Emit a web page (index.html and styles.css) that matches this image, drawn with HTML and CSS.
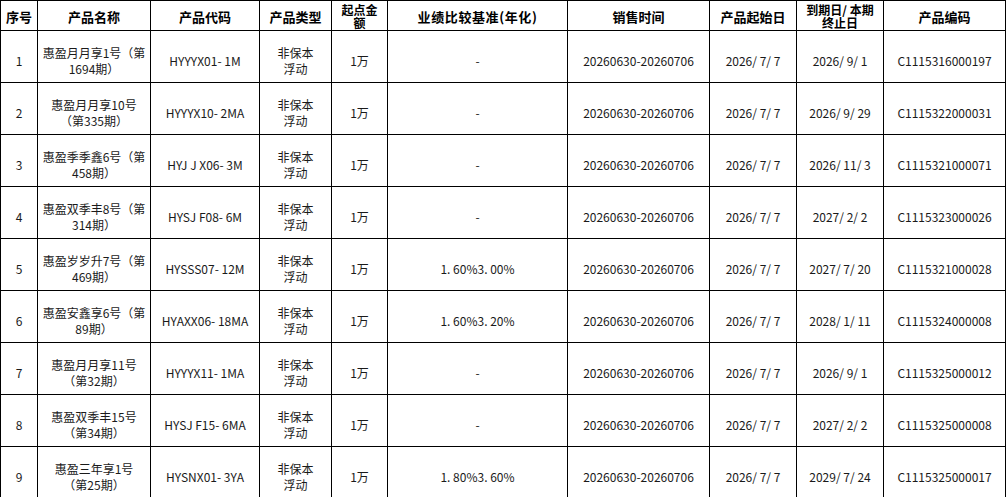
FILE: index.html
```html
<!DOCTYPE html>
<html lang="zh-CN">
<head>
<meta charset="utf-8">
<title>产品列表</title>
<link rel="stylesheet" href="styles.css">
</head>
<body>
<div class="sheet">
  <div class="h">序号</div>
  <div class="h">产品名称</div>
  <div class="h">产品代码</div>
  <div class="h">产品类型</div>
  <div class="h two">起点金<br>额</div>
  <div class="h wide">业绩比较基准(年化)</div>
  <div class="h">销售时间</div>
  <div class="h">产品起始日</div>
  <div class="h two">到期日/ 本期<br>终止日</div>
  <div class="h">产品编码</div>

  <div class="c">1</div>
  <div class="c">惠盈月月享1号（第<br>1694期）</div>
  <div class="c">HYYYX01- 1M</div>
  <div class="c">非保本<br>浮动</div>
  <div class="c">1万</div>
  <div class="c">-</div>
  <div class="c">20260630-20260706</div>
  <div class="c">2026/ 7/ 7</div>
  <div class="c">2026/ 9/ 1</div>
  <div class="c">C1115316000197</div>

  <div class="c">2</div>
  <div class="c">惠盈月月享10号<br>（第335期）</div>
  <div class="c">HYYYX10- 2MA</div>
  <div class="c">非保本<br>浮动</div>
  <div class="c">1万</div>
  <div class="c">-</div>
  <div class="c">20260630-20260706</div>
  <div class="c">2026/ 7/ 7</div>
  <div class="c">2026/ 9/ 29</div>
  <div class="c">C1115322000031</div>

  <div class="c">3</div>
  <div class="c">惠盈季季鑫6号（第<br>458期）</div>
  <div class="c">HYJ J X06- 3M</div>
  <div class="c">非保本<br>浮动</div>
  <div class="c">1万</div>
  <div class="c">-</div>
  <div class="c">20260630-20260706</div>
  <div class="c">2026/ 7/ 7</div>
  <div class="c">2026/ 11/ 3</div>
  <div class="c">C1115321000071</div>

  <div class="c">4</div>
  <div class="c">惠盈双季丰8号（第<br>314期）</div>
  <div class="c">HYSJ F08- 6M</div>
  <div class="c">非保本<br>浮动</div>
  <div class="c">1万</div>
  <div class="c">-</div>
  <div class="c">20260630-20260706</div>
  <div class="c">2026/ 7/ 7</div>
  <div class="c">2027/ 2/ 2</div>
  <div class="c">C1115323000026</div>

  <div class="c">5</div>
  <div class="c">惠盈岁岁升7号（第<br>469期）</div>
  <div class="c">HYSSS07- 12M</div>
  <div class="c">非保本<br>浮动</div>
  <div class="c">1万</div>
  <div class="c">1. 60%3. 00%</div>
  <div class="c">20260630-20260706</div>
  <div class="c">2026/ 7/ 7</div>
  <div class="c">2027/ 7/ 20</div>
  <div class="c">C1115321000028</div>

  <div class="c">6</div>
  <div class="c">惠盈安鑫享6号（第<br>89期）</div>
  <div class="c">HYAXX06- 18MA</div>
  <div class="c">非保本<br>浮动</div>
  <div class="c">1万</div>
  <div class="c">1. 60%3. 20%</div>
  <div class="c">20260630-20260706</div>
  <div class="c">2026/ 7/ 7</div>
  <div class="c">2028/ 1/ 11</div>
  <div class="c">C1115324000008</div>

  <div class="c">7</div>
  <div class="c">惠盈月月享11号<br>（第32期）</div>
  <div class="c">HYYYX11- 1MA</div>
  <div class="c">非保本<br>浮动</div>
  <div class="c">1万</div>
  <div class="c">-</div>
  <div class="c">20260630-20260706</div>
  <div class="c">2026/ 7/ 7</div>
  <div class="c">2026/ 9/ 1</div>
  <div class="c">C1115325000012</div>

  <div class="c">8</div>
  <div class="c">惠盈双季丰15号<br>（第34期）</div>
  <div class="c">HYSJ F15- 6MA</div>
  <div class="c">非保本<br>浮动</div>
  <div class="c">1万</div>
  <div class="c">-</div>
  <div class="c">20260630-20260706</div>
  <div class="c">2026/ 7/ 7</div>
  <div class="c">2027/ 2/ 2</div>
  <div class="c">C1115325000008</div>

  <div class="c">9</div>
  <div class="c">惠盈三年享1号<br>（第25期）</div>
  <div class="c">HYSNX01- 3YA</div>
  <div class="c">非保本<br>浮动</div>
  <div class="c">1万</div>
  <div class="c">1. 80%3. 60%</div>
  <div class="c">20260630-20260706</div>
  <div class="c">2026/ 7/ 7</div>
  <div class="c">2029/ 7/ 24</div>
  <div class="c">C1115325000017</div>
</div>
</body>
</html>
```

FILE: styles.css
```css
html, body {
  margin: 0;
  padding: 0;
  background: #fff;
}

.sheet {
  display: grid;
  grid-template-columns: 36px 112px 108px 71px 55px 179px 141px 86px 86px 121px;
  grid-template-rows: 29px repeat(9, 51px);
  gap: 1px;
  padding: 1px;
  width: 1006px;
  box-sizing: border-box;
  background: #000;
  font-family: "Noto Sans CJK SC", "Noto Sans", sans-serif;
  color: #000;
}

.h,
.c {
  background: #fff;
  display: flex;
  align-items: center;
  justify-content: center;
  text-align: center;
  overflow: hidden;
  box-sizing: border-box;
}

.h {
  font-size: 13px;
  font-weight: bold;
  line-height: 16px;
  padding-top: 3px;
}

.h.two {
  padding-top: 1px;
  font-size: 12px;
  line-height: 13px;
}

.h.wide {
  letter-spacing: 0.6px;
}

.c {
  font-size: 12px;
  line-height: 16px;
  padding-top: 8px;
  color: #1a1a1a;
}
```
